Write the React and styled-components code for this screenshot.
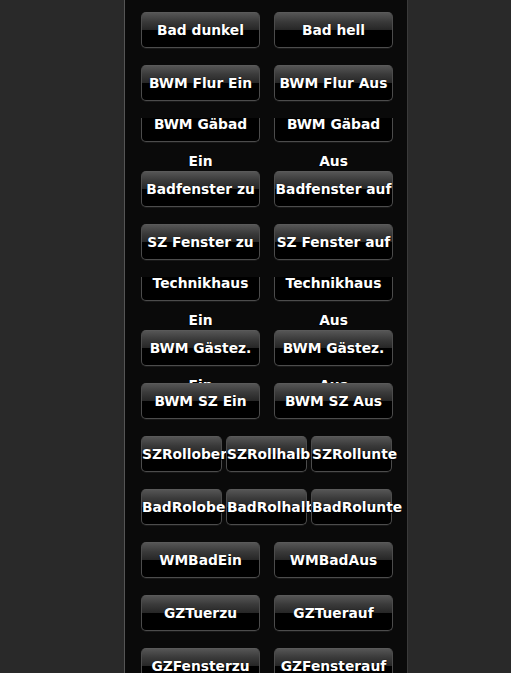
import { memo } from 'react';
import styled, { createGlobalStyle } from 'styled-components';

const rows = [
    { cols: 2, items: ['Bad dunkel', 'Bad hell'] },
    { cols: 2, items: ['BWM Flur Ein', 'BWM Flur Aus'] },
    { cols: 2, items: ['BWM Gäbad Ein', 'BWM Gäbad Aus'], clipped: true },
    { cols: 2, items: ['Badfenster zu', 'Badfenster auf'] },
    { cols: 2, items: ['SZ Fenster zu', 'SZ Fenster auf'] },
    { cols: 2, items: ['Technikhaus Ein', 'Technikhaus Aus'], clipped: true },
    { cols: 2, items: ['BWM Gästez. Ein', 'BWM Gästez. Aus'] },
    { cols: 2, items: ['BWM SZ Ein', 'BWM SZ Aus'] },
    { cols: 3, items: ['SZRollober', 'SZRollhalb', 'SZRollunte'] },
    { cols: 3, items: ['BadRoloben', 'BadRolhalb', 'BadRolunte'] },
    { cols: 2, items: ['WMBadEin', 'WMBadAus'] },
    { cols: 2, items: ['GZTuerzu', 'GZTuerauf'] },
    { cols: 2, items: ['GZFensterzu', 'GZFensterauf'] },
];

function App() {
    return (
        <>
            <GlobalStyle />
            <Page>
                <Panel>
                    {rows.map((r, i) => (
                        <Row key={i} $cols={r.cols}>
                            {r.items.map((t) => (
                                <Button key={t} $clipped={r.clipped}>
                                    <Label $clipped={r.clipped}>{t}</Label>
                                </Button>
                            ))}
                        </Row>
                    ))}
                </Panel>
            </Page>
        </>
    );
}

const GlobalStyle = createGlobalStyle`
    html, body {
        margin: 0;
        padding: 0;
        background: #292929;
        height: 100%;
        overflow: hidden;
    }
    body {
        font-family: "DejaVu Sans", Verdana, sans-serif;
    }
`;

const Page = styled.div`
    height: 673px;
    overflow: hidden;
`;

const Panel = styled.div`
    margin-left: 124px;
    width: 252px;
    min-height: 673px;
    box-sizing: content-box;
    background: #0a0a0a;
    border-left: 1px solid #555;
    border-right: 1px solid #3a3a3a;
    padding: 12px 14px 0 16px;
    overflow: hidden;
`;

const Row = styled.div`
    display: grid;
    grid-template-columns: ${(p) => (p.$cols === 3 ? 'repeat(3, 81px)' : 'repeat(2, 119px)')};
    column-gap: ${(p) => (p.$cols === 3 ? '4px' : '14px')};
    height: 36px;
    margin-bottom: 17px;
    align-items: start;
`;

const Button = styled.div`
    position: relative;
    box-sizing: border-box;
    height: ${(p) => (p.$clipped ? '24px' : '36px')};
    border: 1px solid #4c4c4c;
    border-top: ${(p) => (p.$clipped ? 'none' : '1px solid #5a5a5a')};
    border-radius: ${(p) => (p.$clipped ? '0 0 5px 5px' : '5px')};
    background: ${(p) =>
        p.$clipped
            ? '#000'
            : 'linear-gradient(#555 0%, #3a3a3a 25%, #262626 50%, #000 50%, #000 100%)'};
    box-shadow: 0 1px 0 rgba(255, 255, 255, 0.06);
    color: #fff;
    text-align: center;
    cursor: pointer;
`;

const Label = styled.div`
    margin-top: ${(p) => (p.$clipped ? '-12px' : '-1px')};
    font-size: 13.8px;
    font-weight: bold;
    line-height: 37px;
    text-shadow: 0 1px 1px #000, 0 0 1px #000;
    word-break: normal;
`;

export default memo(App);
